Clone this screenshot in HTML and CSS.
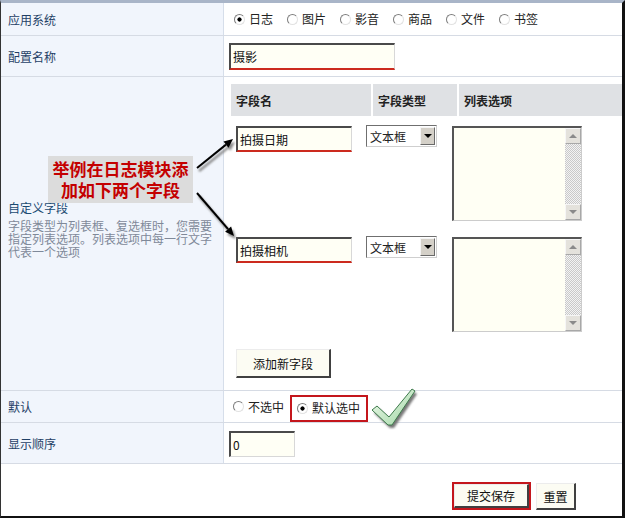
FILE: index.html
```html
<!DOCTYPE html>
<html lang="zh-CN">
<head>
    <meta charset="UTF-8">
    <title>自定义字段设置</title>
    <link rel="stylesheet" href="styles.css">
</head>
<body>
    <div class="frame">
        <div class="row row-app">
            <div class="row-label">应用系统</div>
            <div class="row-value">
                <label class="radio"><input type="radio" name="app" checked>日志</label>
                <label class="radio"><input type="radio" name="app">图片</label>
                <label class="radio"><input type="radio" name="app">影音</label>
                <label class="radio"><input type="radio" name="app">商品</label>
                <label class="radio"><input type="radio" name="app">文件</label>
                <label class="radio"><input type="radio" name="app">书签</label>
            </div>
        </div>

        <div class="row row-name">
            <div class="row-label">配置名称</div>
            <div class="row-value">
                <input type="text" class="text name-input" value="摄影">
            </div>
        </div>

        <div class="row row-fields">
            <div class="row-label">
                <div class="field-title">自定义字段</div>
                <div class="field-tip">字段类型为列表框、复选框时，您需要指定列表选项。列表选项中每一行文字代表一个选项</div>
            </div>
            <div class="row-value">
                <div class="fields">
                    <div class="fields-head">
                        <div>字段名</div>
                        <div>字段类型</div>
                        <div>列表选项</div>
                    </div>
                    <div class="field-row first">
                        <input type="text" class="text field-name" value="拍摄日期">
                        <div class="select"><span class="select-value">文本框</span><span class="select-btn"></span></div>
                        <div class="listbox">
                            <textarea></textarea>
                            <div class="scrollbar"><span class="scroll-btn up"></span><span class="scroll-track"></span><span class="scroll-btn down"></span></div>
                        </div>
                    </div>
                    <div class="field-row">
                        <input type="text" class="text field-name" value="拍摄相机">
                        <div class="select"><span class="select-value">文本框</span><span class="select-btn"></span></div>
                        <div class="listbox">
                            <textarea></textarea>
                            <div class="scrollbar"><span class="scroll-btn up"></span><span class="scroll-track"></span><span class="scroll-btn down"></span></div>
                        </div>
                    </div>
                    <button type="button" class="btn add-btn">添加新字段</button>
                </div>
            </div>
        </div>

        <div class="row row-default">
            <div class="row-label">默认</div>
            <div class="row-value">
                <label class="radio"><input type="radio" name="def">不选中</label>
                <div class="mark-box">
                    <label class="radio"><input type="radio" name="def" checked>默认选中</label>
                </div>
            </div>
        </div>

        <div class="row row-order">
            <div class="row-label">显示顺序</div>
            <div class="row-value">
                <input type="text" class="text order-input" value="0">
            </div>
        </div>

        <div class="actions">
            <div class="mark-btn"><button type="submit" class="btn submit-btn">提交保存</button></div>
            <button type="reset" class="btn reset-btn">重置</button>
        </div>

        <!-- annotation drawn over the screenshot -->
        <div class="note">举例在日志模块添加如下两个字段</div>

        <svg class="overlay" width="625" height="518" viewBox="0 0 625 518">
            <defs>
                <filter id="soft" x="-20%" y="-20%" width="140%" height="140%">
                    <feGaussianBlur stdDeviation="1.3"/>
                </filter>
                <linearGradient id="tickfill" x1="0" y1="0" x2="1" y2="1">
                    <stop offset="0" stop-color="#f2fbee"/>
                    <stop offset="1" stop-color="#9fd6a4"/>
                </linearGradient>
            </defs>
            <g class="shadow" filter="url(#soft)" transform="translate(2 3)">
                <line x1="197" y1="168" x2="226" y2="144.6" stroke="#888" stroke-width="2.4"/>
                <polygon points="233,139 228.5,147.8 223.5,141.5" fill="#888"/>
                <line x1="197" y1="193" x2="228.1" y2="229.2" stroke="#888" stroke-width="2.4"/>
                <polygon points="234,236 231.1,226.6 225.1,231.8" fill="#888"/>
                <polygon points="372,410 377,406 389,417 412,389 415,391 392,425 388,425" fill="#777"/>
            </g>
            <line x1="197" y1="168" x2="226" y2="144.6" stroke="#000" stroke-width="2"/>
            <polygon points="233,139 228.5,147.8 223.5,141.5" fill="#000"/>
            <line x1="197" y1="193" x2="228.1" y2="229.2" stroke="#000" stroke-width="2"/>
            <polygon points="234,236 231.1,226.6 225.1,231.8" fill="#000"/>
            <polygon points="372,410 377,406 389,417 412,389 415,391 392,425 388,425" fill="url(#tickfill)" stroke="#3e7a4c" stroke-width="1"/>
        </svg>
    </div>
</body>
</html>
```

FILE: styles.css
```css
html, body {
    margin: 0;
    padding: 0;
    background-color: #ffffff;
}

body {
    font-family: "Noto Sans CJK SC", "Liberation Sans", sans-serif;
    font-size: 12px;
    color: #222222;
}

.frame {
    position: relative;
    width: 625px;
    height: 518px;
    box-sizing: border-box;
    border-top: 3px solid #a9b5c8;
    border-left: 1px solid #333333;
    border-right: 3px solid #111111;
    border-bottom: 2px solid #111111;
    overflow: hidden;
}

.row {
    display: grid;
    grid-template-columns: 223px 1fr;
    border-bottom: 1px solid #d6dbe4;
    box-sizing: border-box;
}

.row-app { height: 33px; }
.row-name { height: 41px; }
.row-fields { height: 314px; }
.row-default { height: 32px; }
.row-order { height: 41px; }

.row-label {
    background-color: #f1f5fc;
    border-right: 1px solid #d6deea;
    padding-left: 7px;
    display: flex;
    flex-direction: column;
    justify-content: center;
    color: #1f3f66;
    white-space: nowrap;
}

.row-value {
    display: flex;
    align-items: center;
}

.row-app .row-value { padding-left: 10px; }
.row-default .row-value { padding-left: 9px; }

.field-title {
    line-height: 14px;
    color: #1a4a72;
}

.field-tip {
    width: 205px;
    padding-top: 4px;
    white-space: normal;
    line-height: 13px;
    color: #7f8999;
}

.row-fields .row-label {
    padding-bottom: 8px;
}

.row-fields .row-value {
    align-items: flex-start;
    padding-top: 7px;
    padding-left: 7px;
}

/* radios */
.radio {
    display: inline-flex;
    align-items: center;
    margin-right: 14px;
    line-height: 14px;
    color: #222222;
}

.radio input {
    appearance: none;
    -webkit-appearance: none;
    width: 11px;
    height: 11px;
    margin: 0 4px 0 0;
    border-radius: 50%;
    border: 1px solid;
    border-color: #7d7d7d #e2e2e2 #e2e2e2 #7d7d7d;
    background-color: #ffffff;
    box-sizing: border-box;
}

.radio input:checked {
    background: radial-gradient(circle, #000000 0 1.8px, #ffffff 2.4px);
}

/* text inputs */
.text {
    box-sizing: border-box;
    border-style: solid;
    border-width: 2px 1px 1px 2px;
    border-color: #4a4a4a #d8d8d8 #d8d8d8 #4a4a4a;
    background-color: #fffff5;
    font-family: "Noto Sans CJK SC", "Liberation Sans", sans-serif;
    font-size: 12px;
    color: #111111;
    padding: 0 2px;
    outline: none;
}

.name-input {
    margin-left: 5px;
    width: 166px;
    height: 27px;
    border-bottom: 2px solid #cc2a1e;
}

.order-input {
    margin-left: 5px;
    width: 66px;
    height: 26px;
    margin-top: 2px;
}

/* field table */
.fields {
    width: 391px;
}

.fields-head {
    display: grid;
    grid-template-columns: 140px 84px 1fr;
    column-gap: 2px;
    height: 32px;
}

.fields-head div {
    background-color: #dfe1e4;
    padding-left: 5px;
    display: flex;
    align-items: center;
    font-weight: bold;
    color: #222222;
}

.field-row {
    display: flex;
    align-items: flex-start;
    margin-top: 16px;
}

.field-row.first {
    margin-top: 10px;
}

.field-name {
    margin-left: 5px;
    width: 116px;
    height: 26px;
    border-bottom: 2px solid #cc2a1e;
}

.select {
    margin-left: 14px;
    margin-top: -1px;
    width: 71px;
    height: 22px;
    box-sizing: border-box;
    border: 1px solid;
    border-color: #6f6f6f #cfcfcf #cfcfcf #6f6f6f;
    background-color: #ffffff;
    display: flex;
    align-items: stretch;
}

.select-value {
    flex: 1;
    padding-left: 3px;
    display: flex;
    align-items: center;
}

.select-btn {
    width: 15px;
    margin: 1px;
    box-sizing: border-box;
    background-color: #d4d0c8;
    border: 1px solid;
    border-color: #f4f4f4 #6a6a6a #6a6a6a #f4f4f4;
    display: flex;
    align-items: center;
    justify-content: center;
}

.select-btn::after {
    content: "";
    border-top: 4px solid #000000;
    border-left: 4px solid transparent;
    border-right: 4px solid transparent;
}

.listbox {
    margin-left: 15px;
    width: 130px;
    height: 95px;
    box-sizing: border-box;
    border-style: solid;
    border-width: 2px 1px 1px 2px;
    border-color: #555555 #cccccc #cccccc #555555;
    background-color: #fffff4;
    display: flex;
}

.listbox textarea {
    flex: 1;
    border: 0;
    padding: 0;
    resize: none;
    outline: none;
    background: transparent;
}

.scrollbar {
    width: 16px;
    display: flex;
    flex-direction: column;
}

.scroll-btn {
    height: 16px;
    box-sizing: border-box;
    background-color: #e4e2dc;
    border: 1px solid;
    border-color: #f6f6f6 #a8a8a8 #a8a8a8 #f6f6f6;
    display: flex;
    align-items: center;
    justify-content: center;
}

.scroll-btn.up::after {
    content: "";
    border-bottom: 4px solid #8a8a8a;
    border-left: 4px solid transparent;
    border-right: 4px solid transparent;
}

.scroll-btn.down::after {
    content: "";
    border-top: 4px solid #8a8a8a;
    border-left: 4px solid transparent;
    border-right: 4px solid transparent;
}

.scroll-track {
    flex: 1;
    background: repeating-conic-gradient(#c9c9c9 0 25%, #f3f3f3 0 50%) 0 0 / 2px 2px;
}

/* buttons */
.btn {
    box-sizing: border-box;
    background-color: #fcfcf3;
    border-style: solid;
    border-width: 1px 2px 2px 1px;
    border-color: #ececec #404040 #404040 #ececec;
    font-family: "Noto Sans CJK SC", "Liberation Sans", sans-serif;
    font-size: 12px;
    color: #111111;
    padding: 0;
    cursor: pointer;
}

.add-btn {
    margin-left: 5px;
    margin-top: 17px;
    width: 95px;
    height: 29px;
}

.mark-box {
    margin-top: 3px;
    height: 27px;
    box-sizing: border-box;
    border: 2px solid #c4161c;
    padding: 0 6px 0 5px;
    display: flex;
    align-items: center;
}

.mark-box .radio {
    margin-right: 0;
}

.row-default .row-value > .radio {
    margin-right: 6px;
}

.actions {
    display: flex;
    justify-content: flex-end;
    align-items: flex-start;
    padding-top: 18px;
    padding-right: 46px;
}

.mark-btn {
    width: 79px;
    height: 28px;
    box-sizing: border-box;
    border: 2px solid #c4161c;
    display: flex;
}

.submit-btn {
    flex: 1;
}

.reset-btn {
    margin-left: 5px;
    margin-top: 1px;
    width: 40px;
    height: 27px;
}

.note {
    position: absolute;
    left: 47px;
    top: 153px;
    width: 145px;
    height: 47px;
    background-color: #dcdcdc;
    color: #c40000;
    font-size: 17px;
    font-weight: bold;
    line-height: 21px;
    text-align: center;
    padding: 2px 4px 0;
    box-sizing: border-box;
}

.overlay {
    position: absolute;
    left: -1px;
    top: -3px;
    pointer-events: none;
}
```
